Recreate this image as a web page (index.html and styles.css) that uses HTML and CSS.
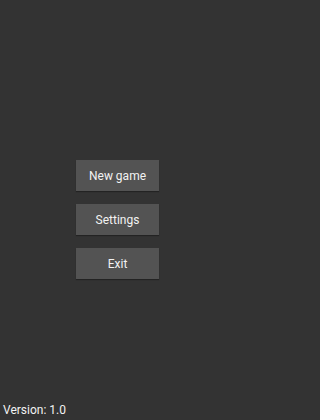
FILE: index.html
```html
<!DOCTYPE html>
<html>
<head>
<meta charset="utf-8">
<link rel="stylesheet" href="styles.css">
</head>
<body>
<div class="screen">
  <div class="menu">
    <div class="btn">New game</div>
    <div class="btn">Settings</div>
    <div class="btn">Exit</div>
  </div>
  <div class="version">Version: 1.0</div>
</div>
</body>
</html>
```
FILE: styles.css
```css
html, body {
  margin: 0;
  padding: 0;
  background: #333333;
}
.screen {
  width: 236px;
  height: 420px;
  display: flex;
  flex-direction: column;
  font-family: Roboto, "Noto Sans", sans-serif;
  color: #f2f2f2;
}
.menu {
  flex: 1;
  display: flex;
  flex-direction: column;
  align-items: flex-start;
  padding: 160px 0 0 76px;
  gap: 13px;
}
.btn {
  width: 83px;
  height: 31px;
  background: #535353;
  box-shadow: 0 1px 1px rgba(0,0,0,0.3);
  display: flex;
  align-items: center;
  justify-content: center;
  font-size: 12px;
}
.version {
  padding: 0 0 3px 3px;
  font-size: 12px;
  line-height: 14px;
}
```
